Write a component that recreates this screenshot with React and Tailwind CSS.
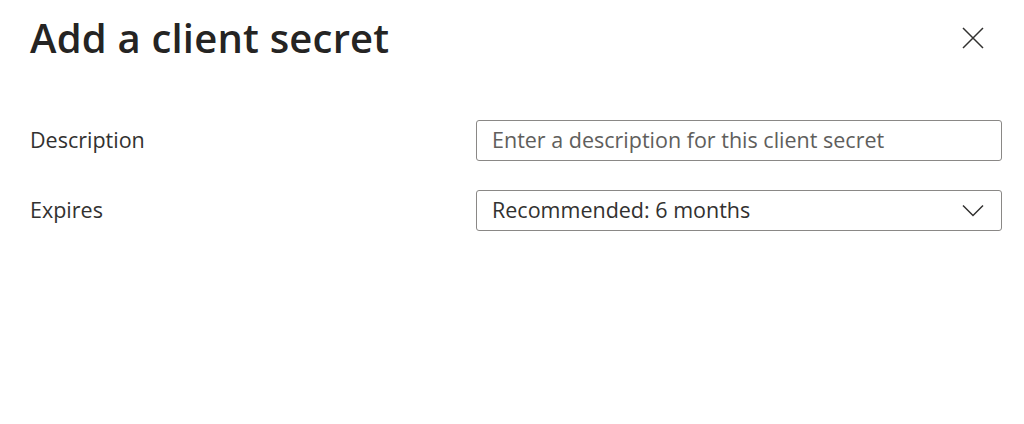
export default function App() {
  const font = { fontFamily: '"Open Sans", "Noto Sans", sans-serif' };
  return (
    <div className="w-[1024px] h-[424px] bg-white text-[#323130] px-[30px]" style={font}>
      <div className="flex items-center justify-between pt-[12px] h-[64px]">
        <h1 className="text-[40px] font-semibold tracking-[0.2px] leading-none text-[#252423]">Add a client secret</h1>
        <button className="mr-[9px] text-[#323130]">
          <svg width="24" height="24" viewBox="0 0 24 24" fill="none" stroke="currentColor" strokeWidth="1.5">
            <path d="M2 2L22 22M22 2L2 22" />
          </svg>
        </button>
      </div>

      <div className="mt-[56px] flex flex-col gap-[29px]">
        <div className="flex items-center justify-between">
          <label className="text-[21.5px]">Description</label>
          <div className="w-[526px] h-[41px] border border-[#8a8886] rounded-[3px] flex items-center px-[15px] mr-[-8px]">
            <span className="text-[21.5px] text-[#605e5c]">Enter a description for this client secret</span>
          </div>
        </div>
        <div className="flex items-center justify-between">
          <label className="text-[21.5px]">Expires</label>
          <div className="w-[526px] h-[41px] border border-[#8a8886] rounded-[3px] flex items-center justify-between pl-[15px] pr-[17px] mr-[-8px]">
            <span className="text-[21.5px] text-[#323130]">Recommended: 6 months</span>
            <svg width="22" height="13" viewBox="0 0 22 13" fill="none" stroke="currentColor" strokeWidth="1.5">
              <path d="M1 1.5L11 11.5L21 1.5" />
            </svg>
          </div>
        </div>
      </div>
    </div>
  );
}
